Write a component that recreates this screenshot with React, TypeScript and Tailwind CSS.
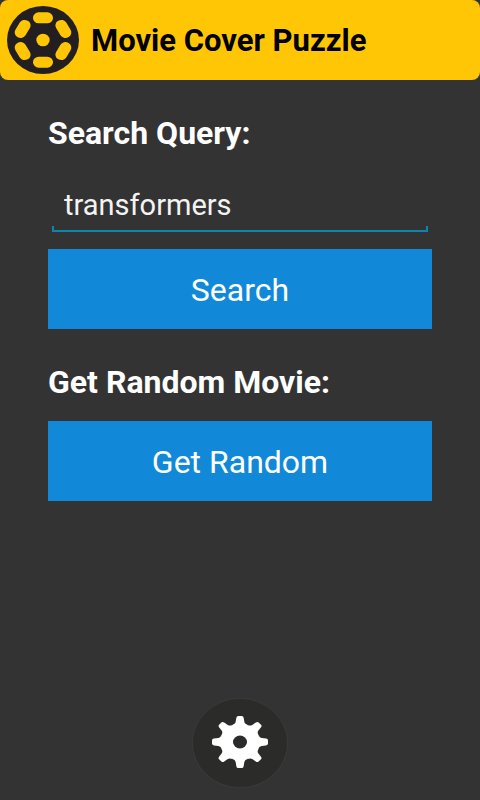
import { useState } from "react";

const HOLE_ANGLES = [0, 60, 120, 180, 240, 300];
const TOOTH_ANGLES = [0, 45, 90, 135, 180, 225, 270, 315];

const ReelIcon = () => (
    <svg viewBox="0 0 216 204" className="h-[68px] w-[72px] shrink-0" aria-hidden="true">
        <g transform="translate(108 102) scale(1 0.944)">
            <circle r="108" fill="#231f20" />
            <circle r="20" fill="#ffc605" />
            {HOLE_ANGLES.map((angle) => (
                <rect
                    key={angle}
                    x="-30"
                    y="-88"
                    width="60"
                    height="35"
                    rx="17"
                    fill="#ffc605"
                    transform={`rotate(${angle})`}
                />
            ))}
        </g>
    </svg>
);

const GearIcon = () => (
    <svg viewBox="0 0 288 270" className="h-[90px] w-24" aria-hidden="true">
        <ellipse cx="144" cy="135" rx="143" ry="134" fill="#2b2b2a" stroke="#414141" strokeWidth="2" />
        <g transform="translate(144 132) scale(1 0.93)">
            <circle r="58" fill="#fff" />
            {TOOTH_ANGLES.map((angle) => (
                <path
                    key={angle}
                    d="M0 0L-23 -55C-18 -57 -14 -59 -13 -65L-11 -78Q-10 -84 -5 -84H5Q10 -84 11 -78L13 -65C14 -59 18 -57 23 -55Z"
                    fill="#fff"
                    transform={`rotate(${angle})`}
                />
            ))}
            <circle r="21" fill="#2b2b2a" />
        </g>
    </svg>
);

export default function App() {
    const [query, setQuery] = useState("transformers");

    return (
        <div className="flex min-h-screen flex-col bg-[#333333] font-['Roboto',sans-serif] text-white">
            <header className="flex h-20 items-center gap-3 rounded-lg bg-[#ffc605] px-[7px]">
                <ReelIcon />
                <h1 className="pt-[2px] text-[31px] leading-10 font-bold text-black">Movie Cover Puzzle</h1>
            </header>

            <main className="flex flex-1 flex-col px-12 pt-[33px]">
                <form onSubmit={(e) => e.preventDefault()}>
                    <label htmlFor="query" className="block text-[32px] leading-10 font-bold">
                        Search Query:
                    </label>
                    <div className="mx-1 mt-[25px] flex flex-col">
                        <input
                            id="query"
                            type="text"
                            value={query}
                            onChange={(e) => setQuery(e.target.value)}
                            className="h-12 w-full bg-transparent px-3 pt-[6px] text-[29px] leading-10 text-[#f3f3f3] outline-none"
                        />
                        <div className="h-[6px] border-2 border-t-0 border-[#0d86ad]" />
                    </div>
                    <button type="submit" className="mt-[17px] h-20 w-full bg-[#1188d8] pt-[2px] text-[32px] leading-10">
                        Search
                    </button>
                </form>

                <h2 className="mt-[33px] text-[32px] leading-10 font-bold">Get Random Movie:</h2>
                <button type="button" className="mt-[19px] h-20 w-full bg-[#1188d8] pt-[2px] text-[32px] leading-10">
                    Get Random
                </button>
            </main>

            <footer className="flex justify-center pb-3">
                <button type="button" aria-label="Settings" className="rounded-full">
                    <GearIcon />
                </button>
            </footer>
        </div>
    );
}
